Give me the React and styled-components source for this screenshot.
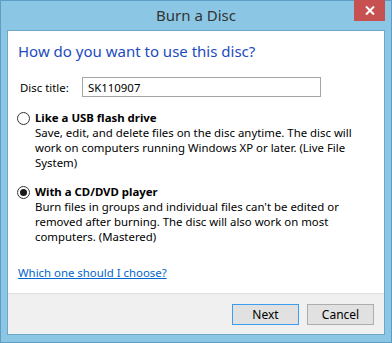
import React from 'react'
import styled, { createGlobalStyle } from 'styled-components'

const GlobalStyle = createGlobalStyle`
  html, body {
    margin: 0;
    padding: 0;
    background: #ffffff;
  }
  body {
    font-family: "Noto Sans", "Open Sans", sans-serif;
    font-size: 11.4px;
    line-height: 15px;
    color: #000;
  }
`;

const Window = styled.div`
  width: 392px;
  height: 343px;
  box-sizing: border-box;
  border: 1px solid #5d9fc4;
  background: #8bc7e5;
  display: flex;
  flex-direction: column;
`;

const TitleBar = styled.div`
  height: 29px;
  flex: none;
  display: grid;
  grid-template-columns: 1fr auto 1fr;
  align-items: start;
`;

const Title = styled.div`
  grid-column: 2;
  padding-top: 4px;
  font-size: 15px;
  line-height: 20px;
  color: #333;
`;

const CloseButton = styled.button`
  grid-column: 3;
  justify-self: end;
  margin: -1px 6px 0 0;
  width: 31px;
  height: 21px;
  border: 0;
  padding: 0;
  background: #c75050;
  display: flex;
  align-items: center;
  justify-content: center;
`;

const Panel = styled.div`
  flex: 1;
  min-height: 0;
  margin: 0 6px 7px;
  border: 1px solid #6ea6c6;
  display: flex;
  flex-direction: column;
`;

const Body = styled.div`
  flex: 1;
  min-height: 0;
  overflow: hidden;
  background: #fff;
  padding: 10px 10px 0;
  display: flex;
  flex-direction: column;
  align-items: flex-start;
`;

const Heading = styled.div`
  font-size: 15px;
  color: #1c4bbf;
  line-height: 20px;
`;

const TitleRow = styled.div`
  display: flex;
  align-items: center;
  margin-top: 16px;
  padding-left: 2px;
`;

const Label = styled.label`
  width: 62px;
`;

const TextBox = styled.input`
  width: 239px;
  height: 20px;
  box-sizing: border-box;
  border: 1px solid #a5a5a5;
  padding: 0 5px;
  font: inherit;
  outline: none;
`;

const Option = styled.div`
  display: grid;
  grid-template-columns: 17px 1fr;
  margin-top: ${p => p.$gap}px;
`;

const Radio = styled.span`
  width: 11px;
  height: 11px;
  margin: 2px 0 0 -1px;
  border: 1px solid #333;
  border-radius: 50%;
  display: flex;
  align-items: center;
  justify-content: center;
  &::after {
    content: '';
    width: 7px;
    height: 7px;
    border-radius: 50%;
    background: ${p => (p.$checked ? '#1a1a1a' : 'transparent')};
  }
`;

const OptionTitle = styled.div`
  font-weight: bold;
`;

const OptionText = styled.div`
  grid-column: 2;
  padding-right: 18px;
`;

const HelpLink = styled.a`
  margin-top: 21px;
  color: #0066cc;
  text-decoration: underline;
`;

const Footer = styled.div`
  height: 41px;
  flex: none;
  box-sizing: border-box;
  border-top: 1px solid #dfdfdf;
  background: #f0f0f0;
  display: flex;
  justify-content: flex-end;
  align-items: flex-start;
  gap: 8px;
  padding: 10px 10px 0 0;
`;

const Button = styled.button`
  width: 67px;
  height: 21px;
  box-sizing: border-box;
  border: 1px solid ${p => (p.$default ? '#3c9cf0' : '#adadad')};
  background: #e1e1e1;
  font: inherit;
  font-size: 12px;
  color: #000;
  padding: 0;
`;

export default function App() {
  return (
    <>
      <GlobalStyle />
      <Window>
        <TitleBar>
          <Title>Burn a Disc</Title>
          <CloseButton>
            <svg width="10" height="9" viewBox="0 0 10 9">
              <path d="M1 0.5 L9 8.5 M9 0.5 L1 8.5" stroke="#fff" strokeWidth="2" />
            </svg>
          </CloseButton>
        </TitleBar>
        <Panel>
          <Body>
            <Heading>How do you want to use this disc?</Heading>
            <TitleRow>
              <Label>Disc title:</Label>
              <TextBox defaultValue="SK110907" />
            </TitleRow>
            <Option $gap={13}>
              <Radio />
              <OptionTitle>Like a USB flash drive</OptionTitle>
              <OptionText>
                Save, edit, and delete files on the disc anytime. The disc will work on computers running Windows XP or later. (Live File System)
              </OptionText>
            </Option>
            <Option $gap={14}>
              <Radio $checked />
              <OptionTitle>With a CD/DVD player</OptionTitle>
              <OptionText>
                Burn files in groups and individual files can't be edited or removed after burning. The disc will also work on most computers. (Mastered)
              </OptionText>
            </Option>
            <HelpLink href="#">Which one should I choose?</HelpLink>
          </Body>
          <Footer>
            <Button $default>Next</Button>
            <Button>Cancel</Button>
          </Footer>
        </Panel>
      </Window>
    </>
  );
}
